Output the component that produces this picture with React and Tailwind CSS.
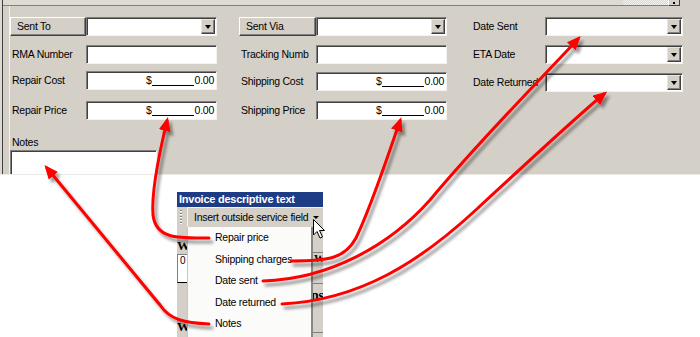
import React from "react";

function Raised({ className = "", children }) {
  return (
    <div
      className={`h-[19px] bg-[#d4d0c8] border border-t-white border-l-white border-r-[#404040] border-b-[#404040] shadow-[inset_-1px_-1px_0_#808080] flex items-center pl-[6px] whitespace-nowrap ${className}`}
    >
      {children}
    </div>
  );
}

function DropBtn() {
  return (
    <div className="w-[14px] h-[15px] bg-[#d4d0c8] border border-t-[#e8e6e0] border-l-[#e8e6e0] border-r-[#404040] border-b-[#404040] shadow-[inset_-1px_-1px_0_#808080] flex items-center justify-center">
      <div className="w-0 h-0 border-l-[3.5px] border-r-[3.5px] border-t-[4px] border-l-transparent border-r-transparent border-t-black" />
    </div>
  );
}

function Field({ className = "", children }) {
  return (
    <div
      className={`h-[19px] bg-white border border-t-[#808080] border-l-[#808080] border-r-[#f4f3ef] border-b-[#f4f3ef] shadow-[inset_1px_1px_0_#404040] ${className}`}
    >
      {children}
    </div>
  );
}

function Combo({ className = "" }) {
  return (
    <Field className={`flex items-center justify-end pr-[1px] ${className}`}>
      <DropBtn />
    </Field>
  );
}

function Money({ className = "" }) {
  return (
    <Field className={`flex items-center justify-end pr-[2px] leading-[17px] whitespace-nowrap ${className}`}>
      <span>$</span>
      <span className="inline-block w-[42px] h-[10px] border-b border-black mr-[1px]" />
      <span>0.00</span>
    </Field>
  );
}

function Row({ className = "", label, labelW = "w-[76px]", children }) {
  return (
    <div className={`flex h-[19px] ${className}`}>
      <div className={`${labelW} shrink-0 pl-[2px] leading-[19px] whitespace-nowrap`}>{label}</div>
      <div className="flex-1 flex">{children}</div>
    </div>
  );
}

function Panel() {
  return (
    <div className="h-[175px] bg-[#d4d0c8] overflow-hidden flex border-b border-[#ebe9e4]">
      <div className="w-[2px] shrink-0 bg-[#dcd9d2]" />
      <div className="w-[1px] shrink-0 bg-[#404040]" />
      <div className="flex-1 flex flex-col min-w-0">
        <div className="h-[6px] shrink-0 flex">
          <div className="flex-1 bg-[#dedbd5] border-b border-[#808080]" />
          <div className="w-[45px] bg-[repeating-conic-gradient(#f6f5f1_0%_25%,#d8d5ce_0%_50%)] bg-[length:2px_2px] border-b border-[#808080]" />
          <div className="w-[12px] bg-[#d4d0c8] border-l border-white border-r border-r-[#404040] border-b border-b-[#404040] flex justify-center items-end pb-[1px]">
            <div className="w-[2px] h-[2px] bg-black" />
          </div>
          <div className="w-[20px]" />
        </div>
        <div className="flex-1 flex ml-[6px] border-l border-[#f4f3ef] pt-[11px]">
          <div className="w-[207px] flex flex-col shrink-0">
            <div className="flex h-[19px]">
              <Raised className="w-[76px] shrink-0">Sent To</Raised>
              <Combo className="flex-1" />
            </div>
            <Row className="mt-[9px]" label="RMA Number">
              <Field className="flex-1" />
            </Row>
            <Row className="mt-[7px]" label="Repair Cost">
              <Money className="flex-1" />
            </Row>
            <Row className="mt-[11px]" label="Repair Price">
              <Money className="flex-1" />
            </Row>
            <div className="mt-[16px] h-[12px] leading-[12px] pl-[2px]">Notes</div>
            <div className="mt-[2px] w-[147px] h-[40px] bg-white border border-t-[#808080] border-l-[#808080] border-r-[#f4f3ef] shadow-[inset_1px_1px_0_#404040]" />
          </div>
          <div className="ml-[22px] w-[208px] flex flex-col shrink-0">
            <div className="flex h-[19px]">
              <Raised className="w-[77px] shrink-0">Sent Via</Raised>
              <Combo className="flex-1" />
            </div>
            <Row className="mt-[9px]" label="Tracking Numb" labelW="w-[77px]">
              <Field className="flex-1" />
            </Row>
            <Row className="mt-[8px]" label="Shipping Cost" labelW="w-[77px]">
              <Money className="flex-1" />
            </Row>
            <Row className="mt-[10px]" label="Shipping Price" labelW="w-[77px]">
              <Money className="flex-1" />
            </Row>
          </div>
          <div className="ml-[24px] w-[212px] flex flex-col shrink-0">
            <Row label="Date Sent" labelW="w-[74px]">
              <Combo className="flex-1" />
            </Row>
            <Row className="mt-[9px]" label="ETA Date" labelW="w-[74px]">
              <Combo className="flex-1" />
            </Row>
            <Row className="mt-[9px]" label="Date Returned" labelW="w-[74px]">
              <Combo className="flex-1" />
            </Row>
          </div>
        </div>
      </div>
    </div>
  );
}

function Popup() {
  const items = ["Repair price", "Shipping charges", "Date sent", "Date returned", "Notes"];
  return (
    <div className="ml-[177px] mt-[17px] w-[146px] h-[150px] bg-[#d4d0c8] flex flex-col">
      <div className="h-[15px] shrink-0 bg-[#1e3b85] text-white font-bold text-[11px] leading-[15px] pl-[2px] whitespace-nowrap overflow-hidden">
        Invoice descriptive text
      </div>
      <div className="h-[20px] shrink-0 flex items-center">
        <div className="ml-[3px] w-[2px] h-[14px] bg-[repeating-linear-gradient(to_bottom,#808080_0px,#808080_1px,#ffffff_1px,#ffffff_2px,transparent_2px,transparent_3px)]" />
        <div className="ml-[5px] h-[20px] flex-1 flex items-center pl-[6px] border-t border-l border-[#f4f3ef] whitespace-nowrap">
          <span>Insert outside service field</span>
          <div className="ml-[5px] w-0 h-0 border-l-[3px] border-r-[3px] border-t-[3px] border-l-transparent border-r-transparent border-t-black" />
        </div>
      </div>
      <div className="flex flex-1 min-h-0">
        <div className="w-[10px] shrink-0 overflow-hidden flex flex-col">
          <div className="mt-[13px] h-[12px] leading-[12px] font-['Liberation_Serif',serif] font-bold text-[13px] whitespace-nowrap">W</div>
          <div className="mt-[2px] w-[14px] h-[29px] bg-white border border-t-[#808080] border-l-[#808080] pl-[2px] leading-[12px] text-[10px]">0</div>
          <div className="mt-[38px] h-[12px] leading-[12px] font-['Liberation_Serif',serif] font-bold text-[13px] whitespace-nowrap">W</div>
        </div>
        <div className="w-[126px] shrink-0 flex">
          <div className="flex-1 bg-[#fbfbfa] border-l border-[#c8c6c0] flex flex-col">
            {items.map((t) => (
              <div key={t} className="h-[21.5px] leading-[21.5px] pl-[27px] whitespace-nowrap">
                {t}
              </div>
            ))}
          </div>
          <div className="w-[2px] bg-[#8a8884]" />
        </div>
        <div className="flex-1 overflow-hidden flex flex-col">
          <div className="mt-[25px] h-[1px] bg-[#808080]" />
          <div className="h-[10px] leading-[10px] font-['Liberation_Serif',serif] font-bold text-[11px] whitespace-nowrap pl-[1px]">W</div>
          <div className="mt-[20px] h-[1px] bg-[#808080]" />
          <div className="mt-[6px] h-[12px] leading-[12px] font-['Liberation_Serif',serif] font-bold text-[14px] whitespace-nowrap -ml-[2px]">ns</div>
          <div className="mt-[30px] h-[1px] bg-[#808080]" />
        </div>
      </div>
    </div>
  );
}

function Overlay() {
  return (
    <svg className="absolute left-0 top-0 pointer-events-none" width="700" height="337" viewBox="0 0 700 337">
      <defs>
        <marker id="ah" viewBox="0 0 14 12" refX="10" refY="6" markerWidth="14" markerHeight="12" orient="auto" markerUnits="userSpaceOnUse">
          <path d="M0 0 L14 6 L0 12 Z" fill="#ff0000" />
        </marker>
        <filter id="sh" filterUnits="userSpaceOnUse" x="0" y="0" width="700" height="337">
          <feGaussianBlur in="SourceAlpha" stdDeviation="1.4" />
          <feOffset dx="3" dy="4" result="b" />
          <feComponentTransfer>
            <feFuncA type="linear" slope="0.4" />
          </feComponentTransfer>
          <feMerge>
            <feMergeNode />
            <feMergeNode in="SourceGraphic" />
          </feMerge>
        </filter>
      </defs>
      <g filter="url(#sh)" fill="none" stroke="#ff0000" strokeWidth="3" strokeLinecap="round">
        <path d="M209 238 C 180 238, 156 240, 153 215 C 151 190, 160 150, 167 121" markerEnd="url(#ah)" />
        <path d="M209 324 C 185 323, 170 320, 160 305 L 47 168" markerEnd="url(#ah)" />
        <path d="M291 261 C 330 261, 345 258, 356 238 C 372 205, 388 155, 400 121" markerEnd="url(#ah)" />
        <path d="M263 281 C 330 279, 390 245, 430 200 C 480 140, 540 80, 578 39" markerEnd="url(#ah)" />
        <path d="M282 304 C 360 300, 420 262, 478 208 C 530 160, 575 118, 604 94" markerEnd="url(#ah)" />
      </g>
      <path d="M313.5 219.5 L313.5 235 L317 231.5 L320 238 L322.5 237 L319.5 230.5 L324.5 230.5 Z" fill="#ffffff" stroke="#000000" strokeWidth="1" strokeLinejoin="round" />
    </svg>
  );
}

export default function App() {
  return (
    <div className="relative w-[700px] h-[337px] overflow-hidden bg-white font-['Liberation_Sans',Arial,sans-serif] text-[10.5px] tracking-[-0.25px] text-black">
      <Panel />
      <Popup />
      <Overlay />
    </div>
  );
}
